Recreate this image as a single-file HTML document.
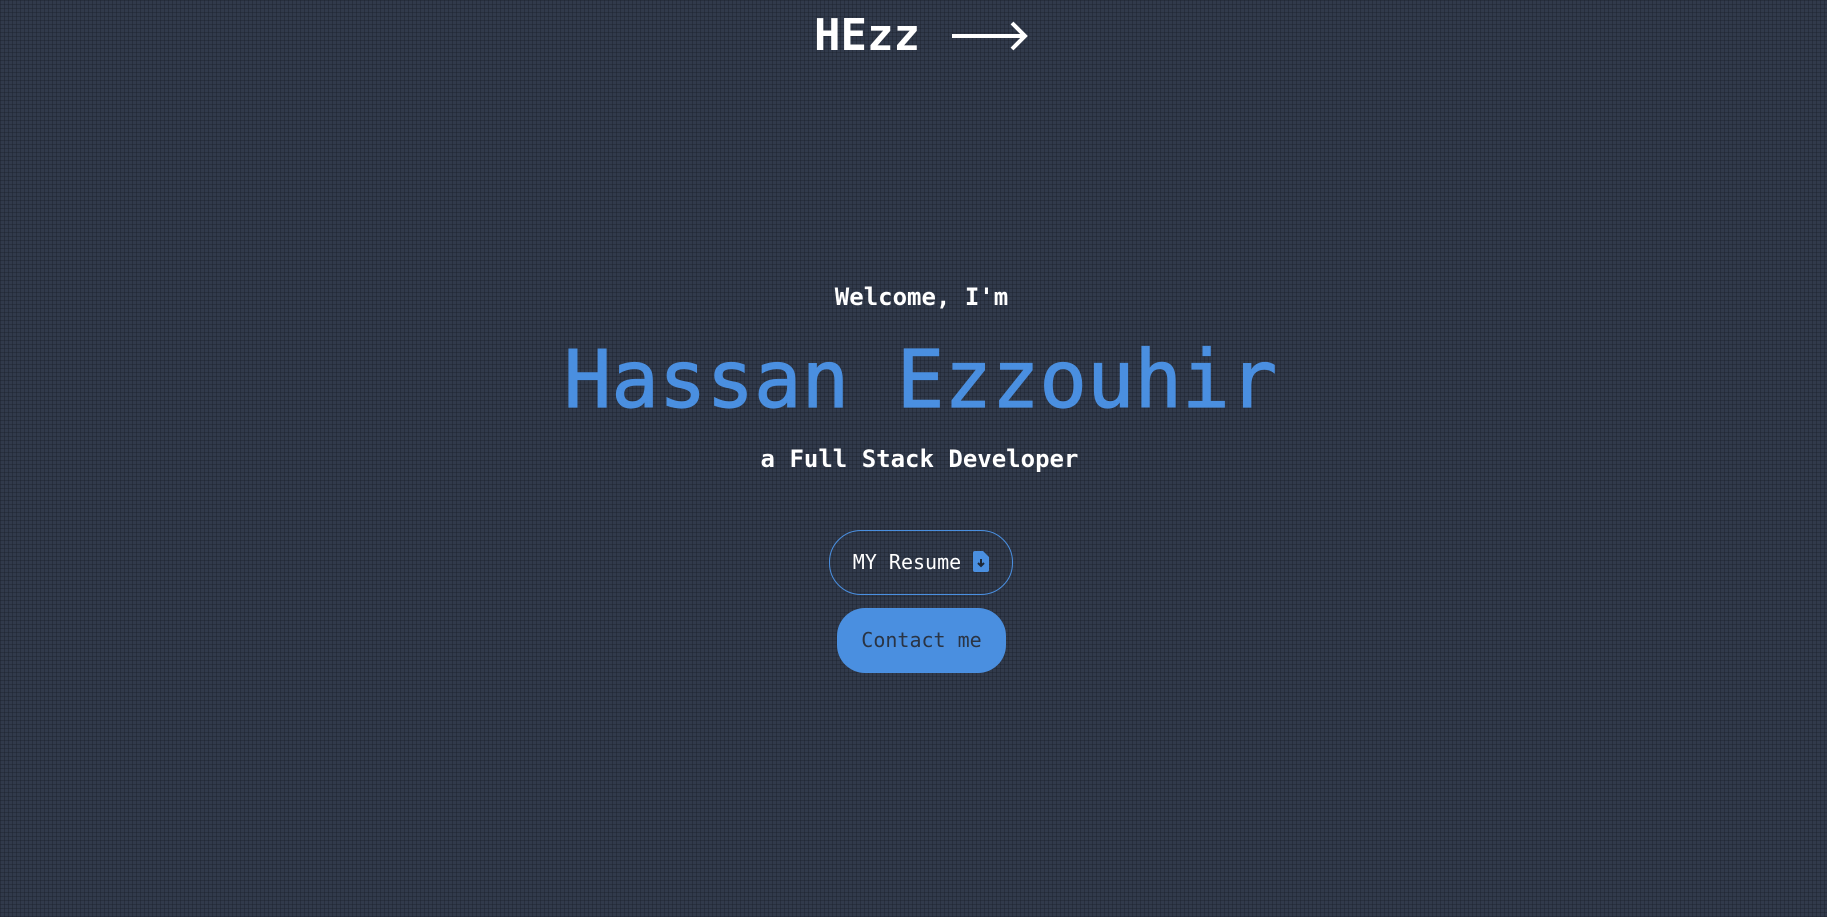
<!DOCTYPE html>
<html><head><meta charset="utf-8"><style>
html,body{margin:0;padding:0}
body{width:1827px;height:917px;overflow:hidden;position:relative;font-family:"DejaVu Sans Mono","Liberation Mono",monospace;
background-color:#313a4b;
background-image:linear-gradient(rgba(28,34,46,.45) 1px,transparent 1px),linear-gradient(90deg,rgba(28,34,46,.45) 1px,transparent 1px);
background-size:4px 4px;}
.c{position:absolute;left:0;width:1827px;text-align:center;white-space:nowrap}
</style></head><body>
<div style="position:absolute;left:814px;top:8px;font-size:44px;font-weight:bold;color:#fff;line-height:56px">HEzz</div>
<svg style="position:absolute;left:952px;top:16px" width="76" height="40" viewBox="0 0 76 40"><path d="M0 20H73M60 7L73 20L60 33" stroke="#fff" stroke-width="4" fill="none"/></svg>
<div class="c" style="top:282px;font-size:24px;font-weight:bold;color:#fff;line-height:30px;padding-left:8px">Welcome, I'm</div>
<div class="c" style="top:330px;font-size:79px;color:#4a8fe0;line-height:100px;padding-left:7px;-webkit-text-stroke:1.2px #4a8fe0">Hassan Ezzouhir</div>
<div class="c" style="top:443px;font-size:24px;font-weight:bold;color:#fff;line-height:32px;padding-left:6px">a Full Stack Developer</div>
<div style="position:absolute;left:829px;top:530px;width:182px;height:63px;border:1px solid #4a8fe0;border-radius:32px;color:#fff;font-size:20px;line-height:63px;text-align:center">MY Resume <svg width="16" height="21" viewBox="0 0 16 21" style="vertical-align:-3px"><path d="M2 0H10L16 6V19Q16 21 14 21H2Q0 21 0 19V2Q0 0 2 0Z" fill="#4a8fe0"/><path d="M8 8V15M5 12L8 15L11 12" stroke="#1e2836" stroke-width="2" fill="none"/></svg></div>
<div style="position:absolute;left:837px;top:608px;width:169px;height:65px;background:#4a8fe0;border-radius:28px;color:#2a3444;font-size:20px;line-height:65px;text-align:center">Contact me</div>
</body></html>
